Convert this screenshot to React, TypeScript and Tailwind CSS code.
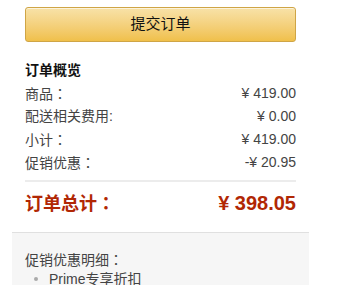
const rows = [
  { label: '商品', colon: '：', value: '¥ 419.00' },
  { label: '配送相关费用', colon: ':', value: '¥ 0.00' },
  { label: '小计', colon: '：', value: '¥ 419.00' },
  { label: '促销优惠', colon: '：', value: '-¥ 20.95' },
];

// centered full-width colon, as in the original page
function Colon({ c = '：' }: { c?: string }) {
  return <span style={{ fontFamily: '"Noto Sans CJK TC", sans-serif' }}>{c}</span>;
}

export default function App() {
  return (
    <div
      className="min-h-[299px] w-[345px] bg-white pt-[7px] pl-[12px] text-[#333]"
      style={{ fontFamily: '"Liberation Sans", Arial, "Noto Sans CJK SC", sans-serif' }}
    >
      <div className="w-[297px]">
        <div className="px-[13px]">
          <button className="flex h-[35px] w-full items-center justify-center rounded-[3px] border border-[#cfa546] bg-gradient-to-b from-[#f8e2a8] to-[#f0c04a] text-[15px] text-[#111] shadow-[0_1px_0_rgba(255,255,255,0.6)_inset]">
            提交订单
          </button>

          <h2 className="mt-[19px] text-[14px] leading-[18px] font-bold text-[#111]">订单概览</h2>

          <div className="mt-[3px]">
            {rows.map((r) => (
              <div key={r.label} className="flex h-[23px] items-center justify-between text-[14px] text-[#444]">
                <span>
                  {r.label}
                  {r.colon === ':' ? ':' : <Colon />}
                </span>
                <span>{r.value}</span>
              </div>
            ))}
          </div>

          <div className="mt-[6px] h-[2px] bg-[#ececec]" />

          <div className="mt-[9px] flex h-[24px] items-center justify-between text-[18px] font-bold text-[#b12704]">
            <span>
              订单总计
              <Colon />
            </span>
            <span className="text-[20px]">¥ 398.05</span>
          </div>
        </div>

        <div className="mt-[17px] h-[53px] overflow-hidden border-t border-[#e0e0e0] bg-[#f6f6f6] px-[13px] pt-[17px] text-[14px] text-[#444]">
          <div className="leading-[18px]">
            促销优惠明细
            <Colon />
          </div>
          <ul className="mt-[1px]">
            <li className="flex items-center leading-[18px]">
              <span className="ml-[9px] mr-[11px] h-[4px] w-[4px] rounded-full bg-[#aaa]" />
              <span>Prime专享折扣</span>
            </li>
          </ul>
        </div>
      </div>
    </div>
  );
}
